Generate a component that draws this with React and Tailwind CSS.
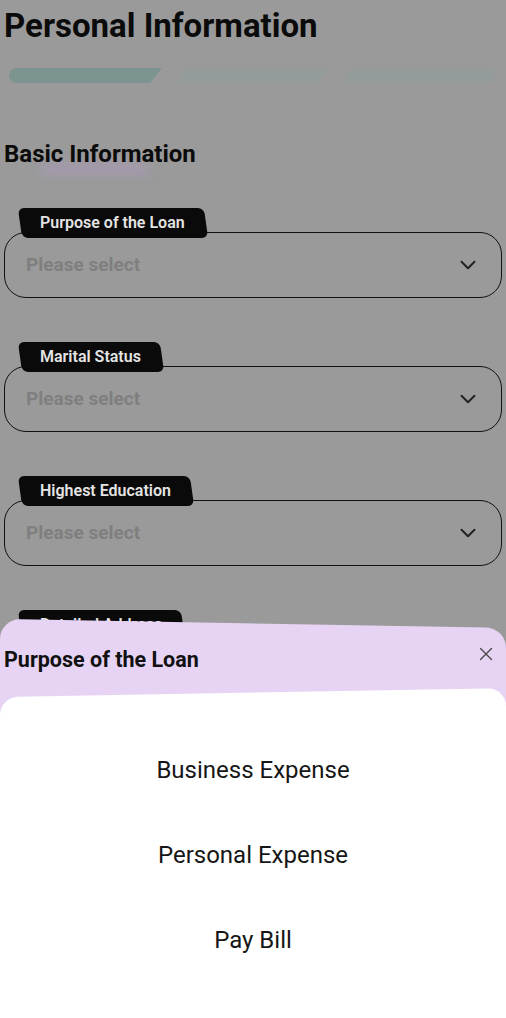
import { ChevronDown, X } from 'lucide-react'

const fields = ['Purpose of the Loan', 'Marital Status', 'Highest Education', 'Detailed Address']
const options = ['Business Expense', 'Personal Expense', 'Pay Bill']

function Field({ label }) {
  return (
    <div className="flex flex-col">
      {/* Tab label */}
      <div className="relative z-10 ml-[20px] h-[30px] self-start pl-[20px] pr-[21px] flex items-center">
        <span className="absolute inset-0 rounded-[6px] bg-[#0a0a0a] skew-x-[8deg]" />
        <span className="relative text-[16px] font-semibold text-[#e4e4e4] leading-none">{label}</span>
      </div>
      <div className="-mt-[6px] mx-[4px] h-[66px] rounded-[22px] border-[1.5px] border-[#111] flex items-center justify-between pl-[21px] pr-[20px]">
        <span className="text-[19px] font-bold text-[#7f7f7f]">Please select</span>
        <ChevronDown size={26} strokeWidth={1.8} className="text-[#222]" />
      </div>
    </div>
  )
}

export default function App() {
  return (
    <div className="relative h-[1018px] w-full overflow-hidden bg-[#9a9a9a] font-['Roboto','Liberation_Sans',sans-serif] text-black">
      {/* Page content (under the dimmed overlay) */}
      <div className="flex flex-col">
        <h1 className="pt-[8px] pl-[4px] text-[33px] leading-[36px] font-bold text-[#0b0b0b]">Personal Information</h1>

        {/* Step progress */}
        <div className="mt-[24px] ml-[9px] flex gap-[16px] h-[15px]">
          <div className="w-[153px] rounded-l-full bg-[#7b948f] [clip-path:polygon(0_0,100%_0,calc(100%_-_12px)_100%,0_100%)]" />
          <div className="w-[150px] bg-[#949c9b] [clip-path:polygon(8px_0,100%_0,calc(100%_-_12px)_100%,0_100%)]" />
          <div className="w-[151px] rounded-r-full bg-[#949c9b] [clip-path:polygon(8px_0,100%_0,100%_100%,0_100%)]" />
        </div>

        <div className="relative mt-[57px] pl-[4px]">
          <span className="absolute left-[40px] top-[24px] h-[10px] w-[110px] rounded-full bg-[#b59ccc]/50 blur-[6px]" />
          <h2 className="relative text-[24px] leading-[28px] font-bold text-[#0b0b0b]">Basic Information</h2>
        </div>

        <div className="mt-[40px] flex flex-col gap-[44px]">
          {fields.map((f) => (
            <Field key={f} label={f} />
          ))}
        </div>
      </div>

      {/* Bottom sheet */}
      <div className="absolute z-20 inset-x-0 top-[619px] bottom-0 flex flex-col">
        <div className="relative h-[78px] flex items-center justify-between pl-[4px] pr-[9px]">
          <span className="absolute inset-x-0 top-0 -bottom-[30px] origin-top-left skew-y-1 rounded-t-[20px] bg-[#e7d4f4]" />
          <h3 className="relative text-[21.5px] font-bold text-[#111] mt-[4px]">Purpose of the Loan</h3>
          <X size={22} strokeWidth={1.5} className="relative -mt-[8px] text-[#4a4a4a]" />
        </div>
        <div className="relative flex-1 flex flex-col pt-[30px]">
          <span className="absolute inset-x-0 top-0 -bottom-[30px] origin-top-left -skew-y-1 rounded-t-[18px] bg-white" />
          {options.map((o) => (
            <div key={o} className="relative h-[85px] flex items-center justify-center text-[24px] text-[#161616]">
              {o}
            </div>
          ))}
        </div>
      </div>
    </div>
  )
}
